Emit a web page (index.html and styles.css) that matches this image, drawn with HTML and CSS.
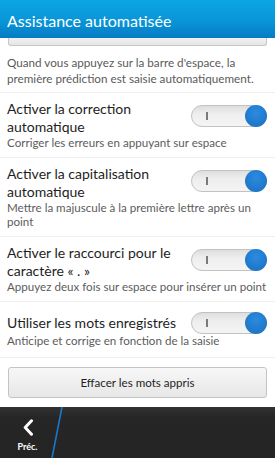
FILE: index.html
```html
<!DOCTYPE html>
<html lang="fr">
<head>
<meta charset="utf-8">
<title>Assistance automatisée</title>
<link rel="stylesheet" href="styles.css">
</head>
<body>
<div class="page">
  <header class="titlebar">Assistance automatisée</header>
  <main class="content">
    <div class="stub"></div>
    <p class="desc">Quand vous appuyez sur la barre d'espace, la première prédiction est saisie automatiquement.</p>
    <div class="row">
      <div class="row-head">
        <div class="title">Activer la correction automatique</div>
        <div class="toggle"><span class="mark"></span><span class="knob"></span></div>
      </div>
      <div class="sub">Corriger les erreurs en appuyant sur espace</div>
    </div>
    <div class="row">
      <div class="row-head">
        <div class="title">Activer la capitalisation automatique</div>
        <div class="toggle"><span class="mark"></span><span class="knob"></span></div>
      </div>
      <div class="sub">Mettre la majuscule à la première lettre après un point</div>
    </div>
    <div class="row">
      <div class="row-head">
        <div class="title">Activer le raccourci pour le caractère « . »</div>
        <div class="toggle"><span class="mark"></span><span class="knob"></span></div>
      </div>
      <div class="sub">Appuyez deux fois sur espace pour insérer un point</div>
    </div>
    <div class="row row-single">
      <div class="row-head">
        <div class="title">Utiliser les mots enregistrés</div>
        <div class="toggle"><span class="mark"></span><span class="knob"></span></div>
      </div>
      <div class="sub">Anticipe et corrige en fonction de la saisie</div>
    </div>
    <div class="btn">Effacer les mots appris</div>
  </main>
  <footer class="actionbar">
    <div class="back">
      <svg class="chev" width="12" height="17" viewBox="0 0 12 17"><path d="M9.5 1.8 L3.2 8.5 L9.5 15.2" fill="none" stroke="#fff" stroke-width="3" stroke-linecap="round" stroke-linejoin="round"/></svg>
      <span class="back-label">Préc.</span>
    </div>
    <svg class="slash" width="14" height="51" viewBox="0 0 14 51"><line x1="12" y1="0" x2="2" y2="51" stroke="#1a78c8" stroke-width="1.6"/></svg>
  </footer>
</div>
</body>
</html>
```

FILE: styles.css
```css
html, body {
  margin: 0;
  padding: 0;
}
body {
  width: 275px;
  height: 458px;
  overflow: hidden;
  background: #ffffff;
  font-family: Lato, "Noto Sans", sans-serif;
}
.page {
  display: flex;
  flex-direction: column;
  height: 458px;
}
.titlebar {
  flex: none;
  height: 38px;
  box-sizing: border-box;
  padding: 9px 0 0 7px;
  color: #ffffff;
  font-size: 16px;
  line-height: 24px;
  background: linear-gradient(to bottom, #0ba6e4 0%, #0995d8 55%, #057cc4 100%);
}
.content {
  flex: 1;
  min-height: 0;
  overflow: hidden;
  display: flex;
  flex-direction: column;
  background: #ffffff;
}
.stub {
  flex: none;
  height: 7px;
  margin: 0 8px;
  background: linear-gradient(to bottom, #f0f0f0, #e6e6e6);
  border: 1px solid #c6c6c6;
  border-top: none;
  border-radius: 0 0 3px 3px;
}
.desc {
  margin: 0;
  padding: 8px 7px 6px;
  font-size: 11.7px;
  line-height: 16px;
  color: #5a5a5a;
  border-bottom: 1px solid #efefef;
}
.row {
  padding: 7px 8px 7px 7px;
  border-bottom: 1px solid #efefef;
}
.row-single {
  padding-top: 10px;
  padding-bottom: 9px;
}
.row-head {
  display: flex;
  align-items: center;
}
.title {
  flex: 1;
  min-width: 0;
  margin-right: 8px;
  font-size: 14px;
  line-height: 18px;
  color: #1e1e1e;
}
.sub {
  font-size: 11.6px;
  line-height: 14px;
  color: #5c5c5c;
}
.toggle {
  position: relative;
  flex: none;
  width: 76px;
  height: 22px;
  box-sizing: border-box;
  border: 1px solid #c2c2c2;
  border-radius: 11px;
  background: linear-gradient(to bottom, #dedede, #eeeeee 40%, #f4f4f4);
  margin-top: -4px;
}
.row-single .toggle {
  margin-top: 0;
}
.mark {
  position: absolute;
  left: 14px;
  top: 6px;
  width: 1.5px;
  height: 8px;
  background: #7a7a7a;
}
.knob {
  position: absolute;
  right: -1px;
  top: -1px;
  width: 22px;
  height: 22px;
  border-radius: 50%;
  background: radial-gradient(circle at 50% 35%, #2b8be0, #1a6fbf);
}
.btn {
  flex: none;
  margin: 9px 8px 0;
  height: 31px;
  box-sizing: border-box;
  border: 1px solid #c4c4c4;
  border-radius: 3px;
  background: linear-gradient(to bottom, #f7f7f7, #e7e7e7);
  font-size: 11.6px;
  line-height: 29px;
  text-align: center;
  color: #1e1e1e;
}
.actionbar {
  height: 51px;
  flex: none;
  display: flex;
  background: linear-gradient(to bottom, #323232, #262626 20%, #242424);
}
.back {
  width: 51px;
  display: flex;
  flex-direction: column;
  align-items: center;
  padding-top: 12px;
  box-sizing: border-box;
  padding-left: 4px;
}
.chev {
  display: block;
}
.back-label {
  margin-top: 5px;
  font-size: 9px;
  line-height: 12px;
  font-weight: 700;
  color: #ffffff;
}
.slash {
  display: block;
  margin-left: -1px;
}
```
